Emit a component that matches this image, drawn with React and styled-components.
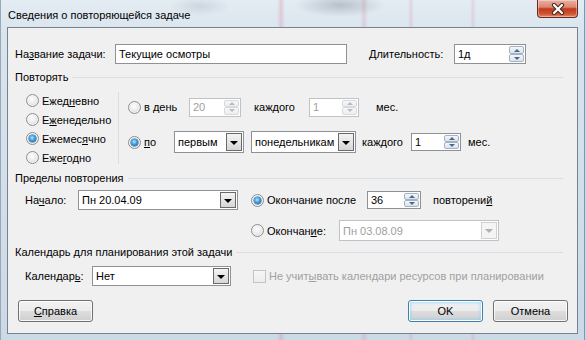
import React from 'react';
import styled, { createGlobalStyle } from 'styled-components';

const Global = createGlobalStyle`
  html, body { margin: 0; padding: 0; background: #fff; }
  body { font-family: "Liberation Sans", Arial, sans-serif; font-size: 11px; color: #000; }
  * { box-sizing: border-box; }
`;

const Window = styled.div`
  width: 585px;
  height: 340px;
  padding: 0 7px 6px 7px;
  display: flex;
  flex-direction: column;
  overflow: hidden;
  background:
    radial-gradient(ellipse 45px 12px at 340px 5px, rgba(105, 115, 130, 0.35), transparent),
    radial-gradient(ellipse 30px 10px at 200px 6px, rgba(140, 150, 165, 0.25), transparent),
    linear-gradient(90deg, transparent 277px, rgba(215, 120, 140, 0.28) 281px, transparent 285px),
    linear-gradient(90deg, transparent 360px, rgba(215, 120, 140, 0.22) 364px, transparent 368px),
    linear-gradient(90deg, transparent 408px, rgba(215, 120, 140, 0.2) 411px, transparent 414px),
    linear-gradient(90deg, transparent 470px, rgba(215, 120, 140, 0.2) 473px, transparent 476px),
    linear-gradient(180deg, #e4ecf3 0%, #d9e4ee 10%, #ccd9e6 100%);
  box-shadow: inset -1px 0 0 #3ab6da, inset 1px 0 0 #9aa7b4;
`;

const TitleBar = styled.div`
  height: 27px;
  display: flex;
  align-items: flex-start;
  flex-shrink: 0;
`;

const Title = styled.div`
  padding: 8px 0 0 1px;
  line-height: 14px;
  font-size: 11px;
  color: #000;
  flex: 1;
`;

const CloseBtn = styled.div`
  width: 41px;
  height: 18px;
  border: 1px solid #6b2a1e;
  border-top: none;
  border-radius: 0 0 4px 4px;
  background: linear-gradient(180deg, #eab1a2 0%, #dc8670 42%, #c2391c 52%, #cf5330 80%, #e58a63 100%);
  box-shadow: inset 0 0 0 1px rgba(255, 255, 255, 0.35);
  display: flex;
  align-items: center;
  justify-content: center;
`;

const Client = styled.div`
  height: 307px;
  border: 1px solid #76828e;
  background: #f0f0f0;
  padding: 0 9px 0 7px;
  display: flex;
  flex-direction: column;
`;

const Row = styled.div`
  display: flex;
  align-items: center;
  flex-shrink: 0;
  margin-top: ${p => p.$top || 0}px;
  height: ${p => p.$h || 20}px;
  padding-left: ${p => p.$pl || 0}px;
`;

const Label = styled.span`
  flex-shrink: 0;
  white-space: nowrap;
  width: ${p => (p.$w ? `${p.$w}px` : 'auto')};
  margin-left: ${p => p.$ml || 0}px;
  color: ${p => (p.$disabled ? '#a0a0a0' : '#000')};
`;

const Key = styled.span`
  text-decoration: underline;
  text-underline-offset: 1px;
`;

const GroupHeader = styled.div`
  display: flex;
  align-items: center;
  height: 14px;
  flex-shrink: 0;
  margin-top: ${p => p.$top || 0}px;
  white-space: nowrap;
`;

const GroupLine = styled.div`
  flex: 1;
  height: 1px;
  margin: 1px 5px 0 4px;
  background: #d5dfe5;
`;

const Field = styled.div`
  flex-shrink: 0;
  display: flex;
  align-items: center;
  width: ${p => p.$w}px;
  height: ${p => p.$h || 20}px;
  margin-left: ${p => p.$ml || 0}px;
  border: 1px solid ${p => (p.$disabled ? '#c0c2c5' : '#8e9297')};
  background: #fff;
  padding-left: 3px;
  white-space: nowrap;
  color: ${p => (p.$disabled ? '#a0a0a0' : '#000')};
`;

const FieldText = styled.span`
  flex: 1;
  overflow: hidden;
`;

const SpinCol = styled.div`
  align-self: stretch;
  width: 15px;
  margin: 1px;
  display: flex;
  flex-direction: column;
`;

const SpinHalf = styled.div`
  flex: 1;
  border: 1px solid ${p => (p.$disabled ? '#d6dae0' : '#a7b2c1')};
  border-radius: 2px;
  background: ${p => (p.$disabled ? 'linear-gradient(#f7f7f7, #eeeeee)' : 'linear-gradient(#f4f7fb, #d9e2ed)')};
  display: flex;
  align-items: center;
  justify-content: center;
  &::after {
    content: '';
    border-left: 3px solid transparent;
    border-right: 3px solid transparent;
    ${p =>
      p.$up
        ? `border-bottom: 3px solid ${p.$disabled ? '#b8bcc2' : '#4a6790'};`
        : `border-top: 3px solid ${p.$disabled ? '#b8bcc2' : '#4a6790'};`}
  }
`;

const DropBtn = styled.div`
  align-self: stretch;
  width: 16px;
  margin: 1px;
  border: 1px solid ${p => (p.$disabled ? '#d0d0d0' : '#6a6a6a')};
  background: ${p => (p.$disabled ? '#f4f4f4' : 'linear-gradient(#f4f4f4, #d6d6d6)')};
  display: flex;
  align-items: center;
  justify-content: center;
  &::after {
    content: '';
    border-left: 4px solid transparent;
    border-right: 4px solid transparent;
    border-top: 4px solid ${p => (p.$disabled ? '#b0b0b0' : '#000')};
    margin-top: 1px;
  }
`;

const Choice = styled.label`
  flex-shrink: 0;
  display: flex;
  align-items: center;
  gap: 3px;
  width: ${p => (p.$w ? `${p.$w}px` : 'auto')};
  height: ${p => p.$h || 20}px;
  margin-left: ${p => p.$ml || 0}px;
  white-space: nowrap;
  color: ${p => (p.$disabled ? '#a0a0a0' : '#000')};
`;

const Radio = styled.span`
  position: relative;
  flex-shrink: 0;
  width: 13px;
  height: 13px;
  border-radius: 50%;
  border: 1px solid #8c8e90;
  background: radial-gradient(circle at 45% 40%, #ffffff 0%, #ececec 45%, #c9cacb 100%);
  box-shadow: inset 0 0 0 1px rgba(255, 255, 255, 0.6);
  ${p =>
    p.$checked &&
    `&::after {
      content: '';
      position: absolute;
      left: 2px; top: 2px;
      width: 7px; height: 7px;
      border-radius: 50%;
      background: radial-gradient(circle at 45% 40%, #b9e8ff 0%, #3d9fe2 45%, #0b4f8e 100%);
      box-shadow: 0 0 0 0.5px #1d5a92;
    }`}
`;

const CheckBox = styled.span`
  flex-shrink: 0;
  width: 13px;
  height: 13px;
  border: 1px solid #c5c5c5;
  background: linear-gradient(#f6f6f6, #ececec);
`;

const RepeatBody = styled.div`
  display: flex;
  margin-top: 7px;
  flex-shrink: 0;
`;

const FreqColumn = styled.div`
  width: 103px;
  padding-left: 11px;
  display: flex;
  flex-direction: column;
`;

const VSep = styled.div`
  width: 1px;
  height: 72px;
  margin-top: 1px;
  background: #d5dfe5;
  flex-shrink: 0;
`;

const PatternColumn = styled.div`
  padding-left: 9px;
  display: flex;
  flex-direction: column;
`;

const ButtonRow = styled.div`
  display: flex;
  align-items: center;
  margin-top: 14px;
  height: 22px;
  padding-left: 3px;
`;

const Spacer = styled.div`
  flex: 1;
`;

const Button = styled.div`
  width: 75px;
  height: 22px;
  margin-left: ${p => p.$ml || 0}px;
  border: 1px solid ${p => (p.$default ? '#3c7fb1' : '#707070')};
  border-radius: 3px;
  background: linear-gradient(180deg, #f2f2f2 0%, #ebebeb 50%, #dddddd 51%, #cfcfcf 100%);
  box-shadow: ${p =>
    p.$default
      ? 'inset 0 0 0 1px #ffffff, inset 0 0 3px 2px rgba(120, 205, 245, 0.55)'
      : 'inset 0 0 0 1px rgba(255, 255, 255, 0.8)'};
  display: flex;
  align-items: center;
  justify-content: center;
  color: #000;
`;

function Spinner({ w, h = 19, ml, value, disabled }) {
  return (
    <Field $w={w} $h={h} $ml={ml} $disabled={disabled}>
      <FieldText>{value}</FieldText>
      <SpinCol>
        <SpinHalf $up $disabled={disabled} />
        <SpinHalf $disabled={disabled} />
      </SpinCol>
    </Field>
  );
}

function Combo({ w, h = 20, ml, value, disabled }) {
  return (
    <Field $w={w} $h={h} $ml={ml} $disabled={disabled}>
      <FieldText>{value}</FieldText>
      <DropBtn $disabled={disabled} />
    </Field>
  );
}

export default function App() {
  return (
    <>
      <Global />
      <Window>
        <TitleBar>
          <Title>Сведения о повторяющейся задаче</Title>
          <CloseBtn>
            <svg width="14" height="12" viewBox="0 0 14 12">
              <path d="M3 2 L11 10 M11 2 L3 10" stroke="#3a2a28" strokeWidth="4.2" strokeLinecap="round" />
              <path d="M3 2 L11 10 M11 2 L3 10" stroke="#ffffff" strokeWidth="2.2" strokeLinecap="round" />
            </svg>
          </CloseBtn>
        </TitleBar>
        <Client>
          <Row $top={16}>
            <Label $w={100}>
              На<Key>з</Key>вание задачи:
            </Label>
            <Field $w={232}>
              <FieldText>Текущие осмотры</FieldText>
            </Field>
            <Label $w={85} $ml={22}>
              <Key>Д</Key>лительность:
            </Label>
            <Spinner w={72} h={20} value="1д" />
          </Row>

          <GroupHeader $top={6}>
            Повторять
            <GroupLine />
          </GroupHeader>

          <RepeatBody>
            <FreqColumn>
              <Choice $h={19}>
                <Radio />
                <span>
                  Ежед<Key>н</Key>евно
                </span>
              </Choice>
              <Choice $h={19}>
                <Radio />
                <span>
                  Е<Key>ж</Key>енедельно
                </span>
              </Choice>
              <Choice $h={19}>
                <Radio $checked />
                <span>
                  Ежемес<Key>я</Key>чно
                </span>
              </Choice>
              <Choice $h={19}>
                <Radio />
                <span>
                  Еже<Key>г</Key>одно
                </span>
              </Choice>
            </FreqColumn>
            <VSep />
            <PatternColumn>
              <Row $top={6} $h={20}>
                <Choice $w={61}>
                  <Radio />
                  <span>в день</span>
                </Choice>
                <Spinner w={52} value="20" disabled />
                <Label $w={55} $ml={13}>
                  каждого
                </Label>
                <Spinner w={50} value="1" disabled />
                <Label $ml={17}>мес.</Label>
              </Row>
              <Row $top={14} $h={22}>
                <Choice $w={46}>
                  <Radio $checked />
                  <span>
                    <Key>п</Key>о
                  </span>
                </Choice>
                <Combo w={70} h={22} value="первым" />
                <Combo w={105} h={22} ml={7} value="понедельникам" />
                <Label $w={49} $ml={6}>
                  каждого
                </Label>
                <Spinner w={50} h={18} value="1" />
                <Label $ml={7}>мес.</Label>
              </Row>
            </PatternColumn>
          </RepeatBody>

          <GroupHeader $top={4}>
            Пределы повторения
            <GroupLine />
          </GroupHeader>

          <Row $top={5} $h={20} $pl={10}>
            <Label $w={53}>
              На<Key>ч</Key>ало:
            </Label>
            <Combo w={160} value="Пн 20.04.09" />
            <Choice $w={116} $ml={13}>
              <Radio $checked />
              <span>Окончание после</span>
            </Choice>
            <Spinner w={54} h={18} value="36" />
            <Label $ml={12}>
              повторени<Key>й</Key>
            </Label>
          </Row>
          <Row $top={10} $h={21} $pl={236}>
            <Choice $w={88}>
              <Radio />
              <span>
                Окончан<Key>и</Key>е:
              </span>
            </Choice>
            <Combo w={160} h={21} value="Пн 03.08.09" disabled />
          </Row>

          <GroupHeader $top={4}>
            Календарь для планирования этой задачи
            <GroupLine />
          </GroupHeader>

          <Row $top={7} $h={20} $pl={10}>
            <Label $w={67}>
              Календар<Key>ь</Key>:
            </Label>
            <Combo w={139} value="Нет" />
            <Choice $ml={22} $disabled>
              <CheckBox />
              <span>
                Не учит<Key>ы</Key>вать календари ресурсов при планировании
              </span>
            </Choice>
          </Row>

          <ButtonRow>
            <Button>
              <span>
                <Key>С</Key>правка
              </span>
            </Button>
            <Spacer />
            <Button $default>OK</Button>
            <Button $ml={10}>Отмена</Button>
          </ButtonRow>
        </Client>
      </Window>
    </>
  );
}
